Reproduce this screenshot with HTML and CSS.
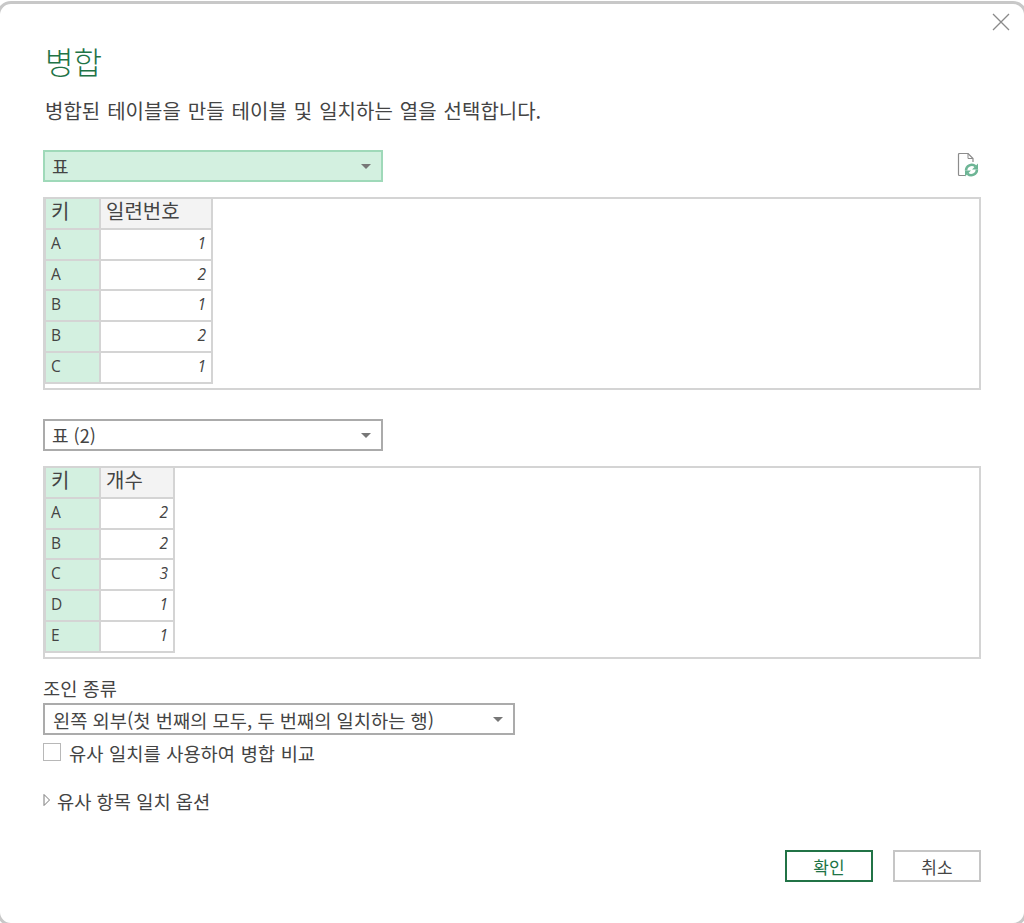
FILE: index.html
```html
<!DOCTYPE html>
<html lang="ko">
<head>
<meta charset="utf-8">
<title>병합</title>
<link rel="stylesheet" href="styles.css">
</head>
<body>
<div class="dialog">
  <button class="close" aria-label="닫기">
    <svg width="18" height="18" viewBox="0 0 18 18"><path d="M1 1L17 17M17 1L1 17" stroke="#8a8a8a" stroke-width="1.3" fill="none"/></svg>
  </button>
  <h1 class="title">병합</h1>
  <p class="subtitle">병합된 테이블을 만들 테이블 및 일치하는 열을 선택합니다.</p>

  <div class="select-row">
    <div class="select select-main select-active"><span>표</span><i class="caret"></i></div>
    <svg class="refresh" width="24" height="26" viewBox="0 0 24 26">
      <path d="M9 22.500H3.500a1 1 0 0 1-1-1V1.500a1 1 0 0 1 1-1H12l5 5v3.500" fill="none" stroke="#8c8c8c" stroke-width="1.200"/>
      <path d="M12 .5v5h5" fill="none" stroke="#8c8c8c" stroke-width="1"/>
      <path d="M10 17.500a5.700 5.700 0 0 1 9.500-4.200" fill="none" stroke="#6db595" stroke-width="2.500"/>
      <path d="M22 10.500v6h-6z" fill="#6db595"/>
      <path d="M21 16.500a5.700 5.700 0 0 1-9.500 4.200" fill="none" stroke="#6db595" stroke-width="2.500"/>
      <path d="M9 23.500v-6h6z" fill="#6db595"/>
    </svg>
  </div>

  <div class="preview preview-first">
    <div class="grid grid-wide">
      <div class="cell key head">키</div><div class="cell head">일련번호</div>
      <div class="cell key">A</div><div class="cell num">1</div>
      <div class="cell key">A</div><div class="cell num">2</div>
      <div class="cell key">B</div><div class="cell num">1</div>
      <div class="cell key">B</div><div class="cell num">2</div>
      <div class="cell key">C</div><div class="cell num">1</div>
    </div>
  </div>

  <div class="select select-main select-second"><span>표 (2)</span><i class="caret"></i></div>

  <div class="preview preview-second">
    <div class="grid grid-narrow">
      <div class="cell key head">키</div><div class="cell head">개수</div>
      <div class="cell key">A</div><div class="cell num">2</div>
      <div class="cell key">B</div><div class="cell num">2</div>
      <div class="cell key">C</div><div class="cell num">3</div>
      <div class="cell key">D</div><div class="cell num">1</div>
      <div class="cell key">E</div><div class="cell num">1</div>
    </div>
  </div>

  <div class="join-label">조인 종류</div>
  <div class="select select-join"><span>왼쪽 외부(첫 번째의 모두, 두 번째의 일치하는 행)</span><i class="caret"></i></div>
  <label class="check"><i class="box"></i><span>유사 일치를 사용하여 병합 비교</span></label>
  <div class="fuzzy">
    <svg width="8" height="14" viewBox="0 0 8 14"><path d="M1 1.500L6.500 7L1 12.500Z" fill="#fff" stroke="#7a7a7a" stroke-width="1"/></svg>
    <span>유사 항목 일치 옵션</span>
  </div>

  <div class="actions">
    <button class="btn btn-primary">확인</button>
    <button class="btn">취소</button>
  </div>
</div>
</body>
</html>
```
FILE: styles.css
```css
* { box-sizing: border-box; }
html, body { margin: 0; height: 100%; background: #fff; }
body {
  font-family: "Noto Sans CJK KR", "Noto Sans", sans-serif;
  color: #444;
  overflow: hidden;
}
.dialog {
  position: relative;
  height: 923px;
  padding: 3px 43px 0;
  background: #fff;
  display: flex;
  flex-direction: column;
}
/* window frame: sides and bottom run off the page, only the corners show */
.dialog::before {
  content: "";
  position: absolute;
  top: 1px;
  left: -3px;
  right: -3px;
  bottom: -3px;
  border: 3px solid #c8c8c8;
  border-radius: 14px;
  pointer-events: none;
}
.close {
  position: absolute;
  top: 13px;
  right: 14px;
  padding: 0;
  border: 0;
  background: none;
  line-height: 0;
}
.title {
  margin: 35px 0 0 2px;
  height: 46px;
  font-size: 31px;
  line-height: 46px;
  font-weight: 300;
  color: #217346;
}
.subtitle {
  margin: 14px 0 0 2px;
  height: 26px;
  font-size: 20px;
  word-spacing: 1.4px;
  line-height: 26px;
  color: #444;
}
.select-row {
  margin-top: 26px;
  display: flex;
  justify-content: space-between;
  align-items: center;
}
.select {
  display: flex;
  align-items: center;
  justify-content: space-between;
  height: 32px;
  padding: 0 10px 0 8px;
  border: 2px solid #ababab;
  font-size: 18.7px;
  color: #444;
  background: #fff;
}
.select-main { width: 340px; font-size: 18px; padding-left: 7px; }
.select-active { background: #d3f0e0; border-color: #9fd9b9; }
.select-second { margin-top: 29px; }
.select-join { width: 472px; margin-top: 3px; }
.caret {
  width: 0;
  height: 0;
  border-left: 5px solid transparent;
  border-right: 5px solid transparent;
  border-top: 5px solid #777;
}
.refresh { margin-right: 1px; }
.preview {
  height: 193px;
  border: 2px solid #d4d4d4;
  background: #fff;
}
.preview-first { margin-top: 15px; }
.preview-second { margin-top: 15px; }
.grid {
  display: grid;
  grid-auto-rows: 28.75px;
  gap: 2px;
  background: #d4d4d4;
  width: max-content;
  padding: 0 2px 2px 1px;
}
.grid-wide { grid-template-columns: 53px 110px; }
.grid-narrow { grid-template-columns: 53px 72px; }
.cell {
  background: #fff;
  padding: 0 5px;
  font-size: 15.5px;
  line-height: 27px;
  color: #444;
  white-space: nowrap;
}
.key { background: #d3f0e0; font-family: "Open Sans", "Noto Sans CJK KR", sans-serif; }
.head { font-size: 20px; line-height: 24px; background: #f3f3f3; font-family: "Noto Sans CJK KR", sans-serif; }
.key.head { background: #d3f0e0; }
.num { text-align: right; font-style: italic; font-family: "Open Sans", sans-serif; }
.join-label {
  margin-top: 17px;
  height: 24px;
  font-size: 18.7px;
  line-height: 24px;
}
.check {
  display: flex;
  align-items: center;
  gap: 8px;
  margin-top: 5px;
  height: 24px;
  font-size: 18.7px;
  word-spacing: 0.4px;
}
.box {
  width: 18px;
  height: 18px;
  border: 1px solid #b8b8b8;
  background: #fff;
}
.fuzzy {
  display: flex;
  align-items: center;
  gap: 6px;
  margin-top: 24px;
  height: 24px;
  font-size: 18.7px;
}
.actions {
  position: absolute;
  right: 43px;
  top: 850px;
  display: flex;
  gap: 20px;
}
.btn {
  width: 88px;
  height: 32px;
  padding: 0;
  border: 2px solid #c6c6c6;
  background: #fff;
  font: inherit;
  font-size: 17px;
  color: #444;
}
.btn-primary { border-color: #217346; color: #217346; }
```
